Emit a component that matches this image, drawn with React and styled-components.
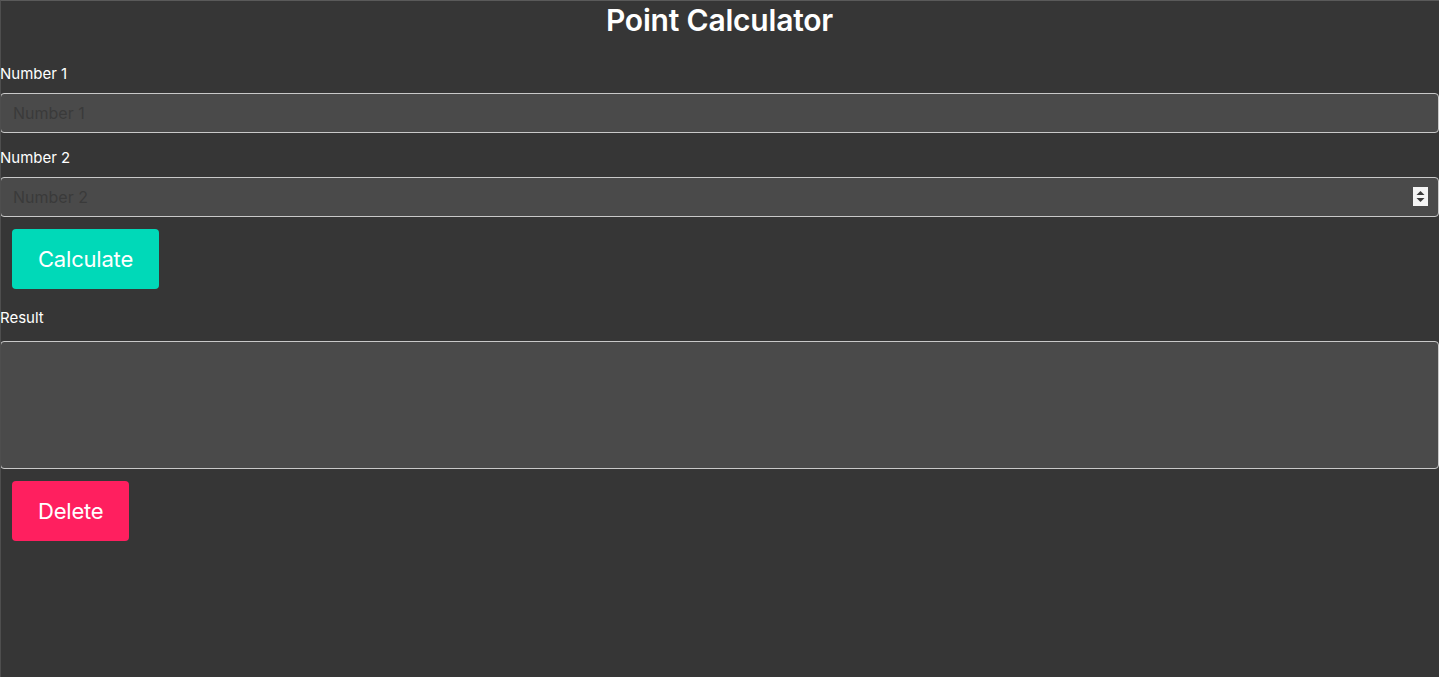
import React, { useState } from 'react';
import styled, { createGlobalStyle } from 'styled-components';

const GlobalStyle = createGlobalStyle`
	html, body {
		margin: 0;
		padding: 0;
		background: #363636;
		color: #ffffff;
		font-family: Inter, "Noto Sans", "Liberation Sans", sans-serif;
	}
	body {
		min-height: 100vh;
	}
	body::after {
		content: '';
		position: fixed;
		inset: 0;
		border-top: 1px solid #5a5a5a;
		border-left: 1px solid #4e4e4e;
		pointer-events: none;
	}
`;

const Page = styled.main`
	display: flex;
	flex-direction: column;
	min-height: 100vh;
	box-sizing: border-box;
`;

const Title = styled.h1`
	margin: 0 0 24px;
	font-size: 30px;
	line-height: 40px;
	font-weight: 600;
	text-align: center;
	letter-spacing: -0.2px;
`;

const Field = styled.div`
	display: flex;
	flex-direction: column;
	margin-bottom: ${(p) => p.$gap || 0}px;
`;

const Label = styled.label`
	font-size: 15px;
	line-height: 20px;
	margin-top: ${(p) => p.$top || 0}px;
	margin-bottom: ${(p) => p.$gap || 9}px;
`;

const InputWrap = styled.div`
	position: relative;
`;

const Input = styled.input`
	display: block;
	width: 100%;
	height: 40px;
	box-sizing: border-box;
	margin: 0;
	padding: 0 12px;
	background: #4a4a4a;
	border: 1px solid #c9c9c9;
	border-radius: 4px;
	color: #ffffff;
	font-family: inherit;
	font-size: 16px;
	outline: none;
	-moz-appearance: textfield;

	&::placeholder {
		color: #3a3a3a;
	}
	&::-webkit-inner-spin-button,
	&::-webkit-outer-spin-button {
		-webkit-appearance: none;
		margin: 0;
	}
`;

const Spinner = styled.span`
	position: absolute;
	right: 11px;
	top: 10px;
	width: 15px;
	height: 19px;
	background: #f4f4f4;
	display: flex;
	align-items: center;
	justify-content: center;
	pointer-events: none;
`;

const Result = styled.textarea`
	display: block;
	width: 100%;
	height: 128px;
	box-sizing: border-box;
	margin: 0;
	padding: 8px 12px;
	background: #4a4a4a;
	border: 1px solid #c9c9c9;
	border-radius: 4px;
	color: #ffffff;
	font-family: inherit;
	font-size: 16px;
	resize: none;
	outline: none;
`;

const Button = styled.button`
	align-self: flex-start;
	height: 60px;
	margin: 12px 0 0 12px;
	padding: 0 26px;
	border: none;
	border-radius: 4px;
	background: ${(p) => p.$color};
	color: #ffffff;
	font-family: inherit;
	font-size: 22px;
	font-weight: 400;
	letter-spacing: -0.2px;
	cursor: pointer;
`;

const App = () => {
	const [a, setA] = useState('');
	const [b, setB] = useState('');
	const [result, setResult] = useState('');

	const calculate = () => {
		if (a === '' || b === '') return;
		setResult(String(Number(a) + Number(b)));
	};

	return (
		<>
			<GlobalStyle />
			<Page>
				<Title>Point Calculator</Title>
				<Field $gap={15}>
					<Label htmlFor="n1">Number 1</Label>
					<Input id="n1" type="text" placeholder="Number 1" value={a} onChange={(e) => setA(e.target.value)} />
				</Field>
				<Field>
					<Label htmlFor="n2">Number 2</Label>
					<InputWrap>
						<Input id="n2" type="number" placeholder="Number 2" value={b} onChange={(e) => setB(e.target.value)} />
						<Spinner>
							<svg width="9" height="13" viewBox="0 0 9 13">
								<path d="M4.5 1 L8.5 5 L0.5 5 Z" fill="#3a3a3a" />
								<path d="M4.5 12 L8.5 8 L0.5 8 Z" fill="#3a3a3a" />
							</svg>
						</Spinner>
					</InputWrap>
				</Field>
				<Button $color="#00d9b8" onClick={calculate}>Calculate</Button>
				<Field>
					<Label htmlFor="res" $top={19} $gap={13}>Result</Label>
					<Result id="res" value={result} readOnly />
				</Field>
				<Button $color="#ff1f5f" onClick={() => setResult('')}>Delete</Button>
			</Page>
		</>
	);
};

export default App;
